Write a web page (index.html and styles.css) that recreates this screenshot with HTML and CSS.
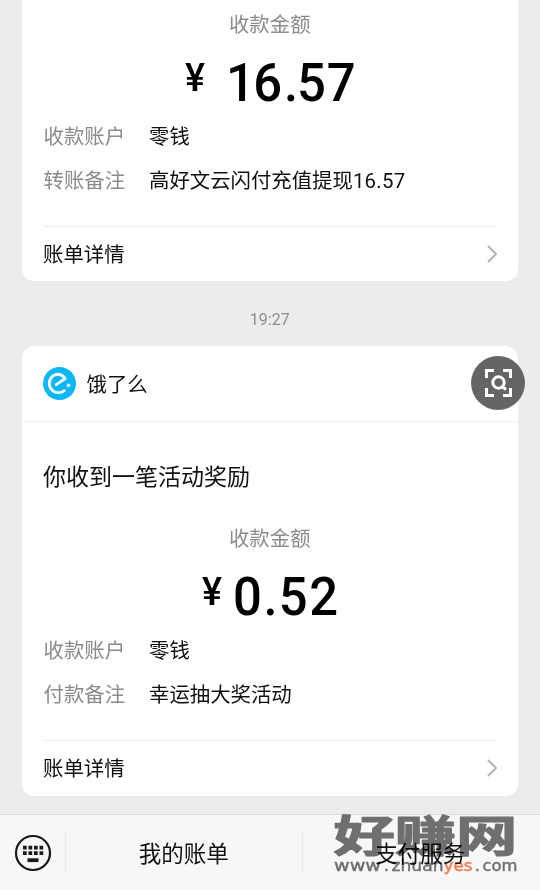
FILE: index.html
```
<!DOCTYPE html>
<html lang="zh-CN">
<head>
<meta charset="utf-8">
<title>账单</title>
<link rel="stylesheet" href="styles.css">
</head>
<body>
<main class="feed">
  <section class="card card-first">
    <div class="label">收款金额</div>
    <div class="amount">
      <svg width="24" height="56" class="yen-wide"><text class="yen" x="0" y="39" textLength="20" lengthAdjust="spacingAndGlyphs">¥</text></svg>
      <svg width="132" height="56"><text class="digits" transform="scale(.94 1)" x="-2 27 59.500 73.500 105" y="49">16.57</text></svg>
    </div>
    <dl class="rows">
      <div class="row"><dt>收款账户</dt><dd>零钱</dd></div>
      <div class="row"><dt>转账备注</dt><dd>高好文云闪付充值提现<span class="num">16.57</span></dd></div>
    </dl>
    <a class="detail"><span>账单详情</span><svg width="12" height="20" viewBox="0 0 12 20"><path class="chevron" d="M2 1l8 8-8 8"/></svg></a>
  </section>

  <time class="time">19:27</time>

  <section class="card">
    <header class="brand">
      <svg width="33" height="33" viewBox="0 0 33 33">
        <circle cx="16.5" cy="16.5" r="16.5" fill="#0bb7f5"/>
        <path d="M13.200 17.600L22.200 11.600C19.300 6.700 13 5.900 9.200 9.600C5.100 13.500 5.500 20.300 9.600 23.600C13.100 26.500 18 26.200 21.400 23.700" fill="none" stroke="#fff" stroke-width="2.800" stroke-linecap="round" stroke-linejoin="round"/>
        <path d="M25 16.200l2.700 1.700-1.700 2.500-2.700-1.700z" fill="#fff"/>
      </svg>
      <span>饿了么</span>
    </header>
    <h2 class="title">你收到一笔活动奖励</h2>
    <div class="label">收款金额</div>
    <div class="amount amount-small">
      <svg width="24" height="56" class="yen-box"><text class="yen" x="0" y="39" textLength="20" lengthAdjust="spacingAndGlyphs">¥</text></svg>
      <svg width="110" height="56"><text class="digits" transform="scale(.94 1)" x="-1 31.500 47.500 80" y="49">0.52</text></svg>
    </div>
    <dl class="rows">
      <div class="row"><dt>收款账户</dt><dd>零钱</dd></div>
      <div class="row"><dt>付款备注</dt><dd>幸运抽大奖活动</dd></div>
    </dl>
    <a class="detail"><span>账单详情</span><svg width="12" height="20" viewBox="0 0 12 20"><path class="chevron" d="M2 1l8 8-8 8"/></svg></a>
  </section>
</main>

<button class="scan" aria-label="扫描">
  <svg width="54" height="54" viewBox="0 0 54 54" fill="none" stroke="#fff" stroke-width="3">
    <path d="M15.500 22v-7.500h7.500M32 14.500h7.500V22M39.500 32v7.500H32M23 39.500h-7.500V32"/>
    <circle cx="27.500" cy="26.500" r="5.700"/><path d="M31 30.500l4 3"/>
  </svg>
</button>

<nav class="bar">
  <div class="keyboard">
    <svg width="38" height="38" viewBox="0 0 38 38">
      <circle cx="19" cy="19" r="17" fill="none" stroke="#191919" stroke-width="2.200"/>
      <path d="M9 13.700h20.200M9 19.200h20.200" stroke="#191919" stroke-width="3.700" stroke-dasharray="3.700 1.800"/>
      <path d="M13.500 26.200h11" stroke="#191919" stroke-width="3.800"/>
    </svg>
  </div>
  <div class="tab">我的账单</div>
  <div class="tab">支付服务</div>
</nav>

<svg class="watermark" width="200" height="80" viewBox="0 0 200 80">
  <text class="mark-name" transform="translate(3.500 47) scale(1.420 1)" x="0" y="0" textLength="129.500" lengthAdjust="spacingAndGlyphs">好赚网</text>
  <g class="mark-url">
    <text x="4" y="66" textLength="47" lengthAdjust="spacingAndGlyphs">www</text>
    <text x="54" y="66">.</text>
    <text x="61.500" y="66" textLength="52" lengthAdjust="spacingAndGlyphs">zhuan</text>
    <text class="accent" x="113.500" y="66" textLength="29" lengthAdjust="spacingAndGlyphs">yes</text>
    <text x="145" y="66">.</text>
    <text x="152.500" y="66" textLength="35" lengthAdjust="spacingAndGlyphs">com</text>
  </g>
</svg>
</body>
</html>
```
FILE: styles.css
```
* { box-sizing: border-box; }
body {
  margin: 0;
  height: 890px;
  overflow: hidden;
  display: flex;
  flex-direction: column;
  position: relative;
  background: #ececec;
  color: #111;
  font: 20.4px/30px Roboto, "Noto Sans CJK SC", sans-serif;
}
.feed { height: 814px; padding: 0 22px 0 21.5px; }
.card { height: 450px; background: #fff; border-radius: 12px; }
.card-first { height: 281px; padding-top: 10px; border-radius: 0 0 12px 12px; }
.label { height: 30px; text-align: center; color: #8b8b8b; }
.amount { display: flex; height: 82px; padding: 12px 0 0 163.5px; }
.amount svg { flex: none; overflow: visible; }
.amount .yen-wide { width: 43px; }
.amount-small { padding-left: 180.5px; }
.amount .yen-box { width: 32px; }
.yen { font: 500 38px Roboto, sans-serif; fill: #000; }
.digits { font: 500 54px Roboto, sans-serif; fill: #000; }
.rows { margin: 0 21px 0 22px; height: 105px; border-bottom: 1px solid #ececec; }
.row { display: flex; height: 44px; }
.num { letter-spacing: .25px; }
dt { width: 105.5px; color: #8b8b8b; }
dd { margin: 0; color: #111; }
.detail { display: flex; align-items: center; justify-content: space-between; height: 55px; padding: 0 20px 0 21.5px; }
.chevron { fill: none; stroke: #b2b2b2; stroke-width: 2; }
.time { display: block; height: 65px; padding-top: 24px; text-align: center; font-size: 16px; color: #8d8d8d; }
.brand { display: flex; align-items: center; gap: 11px; height: 76px; padding-left: 21px; border-bottom: 1px solid #eee; }
.brand span { padding-top: 2px; }
.title { margin: 0; padding: 40.5px 0 0 21.5px; height: 102px; font-size: 23px; font-weight: 400; }
.scan { position: absolute; left: 471px; top: 356px; width: 54px; height: 54px; border: 0; border-radius: 50%; padding: 0; background: #656565; }
.bar { display: flex; align-items: center; height: 76px; background: #f7f7f7; border-top: 1px solid #dcdcdc; font-size: 22.500px; }
.keyboard { width: 66px; height: 44px; padding: 3px 0 0 14px; border-right: 1px solid #eaeaea; }
.tab { flex: 1; height: 44px; line-height: 46px; text-align: center; }
.tab + .tab { border-left: 1px solid #eaeaea; padding-right: 2px; }
.watermark { position: absolute; left: 330px; top: 805px; mix-blend-mode: multiply; }
.mark-name { font: 700 43px "Noto Sans CJK SC", sans-serif; fill: #737373; stroke: #737373; stroke-width: 1.200px; stroke-linejoin: round; }
.mark-url { font: 15px "DejaVu Sans", sans-serif; fill: #737373; stroke: #737373; stroke-width: .4px; }
.accent { fill: #fa7d50; stroke: #fa7d50; }
```
